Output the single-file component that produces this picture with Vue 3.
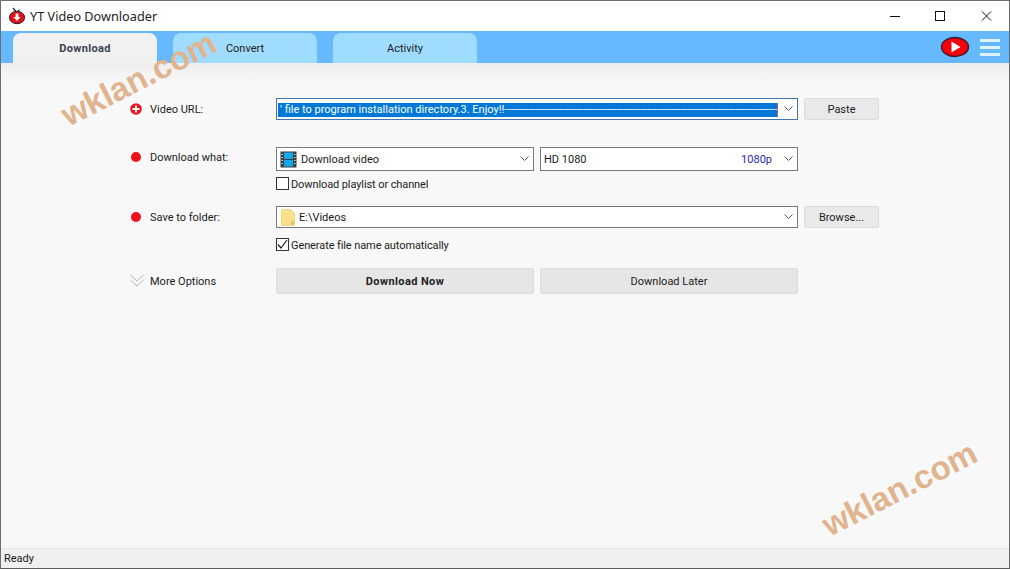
<script setup>
const tabs = ['Download', 'Convert', 'Activity']
const pasted = "' file to program installation directory.3. Enjoy!!" + '-'.repeat(140)
</script>

<template>
  <div class="window">
    <header class="titlebar">
      <svg class="app-icon" width="18" height="18" viewBox="0 0 18 18">
        <path d="M5 1l3.5 4M11.5 2.500L9.500 5" stroke="#222" stroke-width="1.200" fill="none" />
        <ellipse cx="9" cy="10.500" rx="7.600" ry="6.200" fill="#e8101a" stroke="#222" stroke-width="1" />
        <path d="M7.600 6.500h2.800v3.400h2.200L9 14 5.400 9.900h2.200z" fill="#fff" />
      </svg>
      <span class="title">YT Video Downloader</span>
      <div class="win-btns">
        <svg width="46" height="30" viewBox="0 0 46 30"><path d="M21 15.500h10" stroke="#111" /></svg>
        <svg width="46" height="30" viewBox="0 0 46 30"><rect x="19.500" y="10.500" width="9" height="9" fill="none" stroke="#111" /></svg>
        <svg width="46" height="30" viewBox="0 0 46 30"><path d="M19 10.500l9 9M28 10.500l-9 9" stroke="#111" /></svg>
      </div>
    </header>

    <nav class="tabbar">
      <div v-for="(t, n) in tabs" :key="t" class="tab" :class="{ active: n === 0 }">{{ t }}</div>
      <div class="tabbar-tools">
        <svg width="30" height="22" viewBox="0 0 30 22">
          <ellipse cx="15" cy="11" rx="13.500" ry="9.500" fill="#f4000c" stroke="#3a2030" stroke-width="1.400" />
          <path d="M11.500 5.500l9 5.500-9 5.500z" fill="#fff" />
        </svg>
        <div class="burger"><i></i><i></i><i></i></div>
      </div>
    </nav>

    <main class="content">
      <div class="row row-url">
        <svg class="plus" width="12" height="12" viewBox="0 0 12 12">
          <circle cx="6" cy="6" r="5.800" fill="#e8141c" />
          <path d="M6 2.500v7M2.500 6h7" stroke="#fff" stroke-width="1.800" />
        </svg>
        <label>Video URL:</label>
        <div class="field focus span2">
          <div class="value"><span class="selected">{{ pasted }}</span></div>
          <svg class="chev" width="9" height="6" viewBox="0 0 9 6"><path d="M.5 .5l4 4 4-4" fill="none" stroke="#555" /></svg>
        </div>
        <button>Paste</button>
      </div>

      <div class="row row-what">
        <span class="red lift"></span>
        <label class="lift">Download what:</label>
        <div class="field">
          <svg class="film" width="17" height="17" viewBox="0 0 17 17">
            <rect x="0.500" y="0.500" width="16" height="16" fill="#3a3f44" />
            <rect x="4" y="1.500" width="9" height="6.500" fill="#14a8e8" />
            <rect x="4" y="9" width="9" height="6.500" fill="#14a8e8" />
            <path d="M1.500 3.500h1.500M1.500 6.500h1.500M1.500 9.500h1.500M1.500 12.500h1.500M14 3.500h1.500M14 6.500h1.500M14 9.500h1.500M14 12.500h1.500" stroke="#cfd6da" />
          </svg>
          <div class="value">Download video</div>
          <svg class="chev" width="9" height="6" viewBox="0 0 9 6"><path d="M.5 .5l4 4 4-4" fill="none" stroke="#555" /></svg>
        </div>
        <div class="field">
          <div class="value">HD 1080</div>
          <span class="res">1080p</span>
          <svg class="chev" width="9" height="6" viewBox="0 0 9 6"><path d="M.5 .5l4 4 4-4" fill="none" stroke="#555" /></svg>
        </div>
      </div>

      <div class="row row-check1">
        <div class="check col3"><span class="box"></span><span class="check-text">Download playlist or channel</span></div>
      </div>

      <div class="row row-save">
        <span class="red"></span>
        <label>Save to folder:</label>
        <div class="field span2">
          <svg class="folder" width="14" height="17" viewBox="0 0 14 17">
            <path d="M0.500 1.500q0-1 1-1h8l4 4v11q0 1-1 1h-11q-1 0-1-1z" fill="#fbe08c" stroke="#e8d48c" />
            <rect x="10" y="12" width="3" height="4" fill="#e6c65e" />
          </svg>
          <div class="value">E:\Videos</div>
          <svg class="chev" width="9" height="6" viewBox="0 0 9 6"><path d="M.5 .5l4 4 4-4" fill="none" stroke="#555" /></svg>
        </div>
        <button>Browse...</button>
      </div>

      <div class="row row-check2">
        <div class="check col3">
          <span class="box">
            <svg width="11" height="11" viewBox="0 0 11 11"><path d="M1 5.500l3 3.500 6-8" fill="none" stroke="#222" stroke-width="1.200" /></svg>
          </span>
          <span class="check-text">Generate file name automatically</span>
        </div>
      </div>

      <div class="row row-actions">
        <svg width="14" height="14" viewBox="0 0 14 14">
          <path d="M.5 1l6.500 6 6.500-6M.5 6l6.500 6 6.500-6" fill="none" stroke="#b4b4b4" />
        </svg>
        <label>More Options</label>
        <button class="big strong">Download Now</button>
        <button class="big">Download Later</button>
      </div>
    </main>

    <footer class="statusbar">Ready</footer>

    <div class="mark mark-a">wklan.com</div>
    <div class="mark mark-b">wklan.com</div>
  </div>
</template>

<style scoped>
.window {
  position: relative;
  width: 1010px;
  height: 569px;
  box-sizing: border-box;
  border: 1px solid #6e6e6e;
  border-bottom-color: #5c5c5c;
  background: #f8f8f8;
  display: flex;
  flex-direction: column;
  overflow: hidden;
  font-family: Roboto, "Noto Sans", sans-serif;
  font-size: 11px;
  color: #1a1a1a;
}
.titlebar {
  height: 30px;
  background: #fff;
  display: flex;
  align-items: center;
  flex: none;
}
.app-icon {
  margin-left: 7px;
  margin-right: 4px;
}
.title {
  font-family: "Noto Sans", sans-serif;
  font-size: 12.700px;
  color: #222;
}
.win-btns {
  margin-left: auto;
  display: flex;
  gap: 1px;
}
.tabbar {
  height: 32px;
  background: #66b9ff;
  display: flex;
  align-items: flex-end;
  gap: 16px;
  padding-left: 12px;
  flex: none;
}
.tab {
  width: 144px;
  height: 30px;
  box-sizing: border-box;
  padding-top: 1px;
  border-radius: 8px 8px 0 0;
  background: #9fdcff;
  display: flex;
  align-items: center;
  justify-content: center;
  color: #222;
}
.tab.active {
  background: #f1f1f1;
  font-weight: 700;
  letter-spacing: 0.350px;
  color: #3a4250;
}
.tabbar-tools {
  margin-left: auto;
  align-self: center;
  display: flex;
  align-items: center;
  gap: 10px;
  margin-right: 9px;
}
.burger {
  width: 20px;
  display: flex;
  flex-direction: column;
  gap: 4px;
}
.burger i {
  display: block;
  height: 3px;
  background: #dff2ff;
}
.content {
  flex: 1;
  background: linear-gradient(#eeeeee, #f8f8f8 22px);
  padding-left: 129px;
  padding-top: 35px;
}
.row {
  display: grid;
  grid-template-columns: 14px 120px 258px 258px 75px;
  column-gap: 6px;
  align-items: center;
}
.row-what { margin-top: 27px; }
.row-check1 { margin-top: 6px; }
.row-save { margin-top: 16px; }
.row-check2 { margin-top: 10px; }
.row-actions { margin-top: 17px; }
.plus {
  justify-self: start;
  margin-bottom: 1px;
}
.red {
  width: 10px;
  height: 10px;
  margin-left: 1px;
  border-radius: 50%;
  background: #f0101a;
  justify-self: start;
}
.lift {
  margin-bottom: 4px;
}
label {
  color: #222;
}
.field {
  height: 24px;
  box-sizing: border-box;
  border: 1px solid #7a7a7a;
  background: #fff;
  display: flex;
  align-items: center;
  padding-left: 3px;
  min-width: 0;
}
.span2 {
  grid-column: span 2;
  height: 22px;
}
.span2 .value {
  padding-top: 1px;
}
.focus {
  border-color: #4a74ac;
  padding-left: 1px;
}
.value {
  flex: 1;
  min-width: 0;
  white-space: nowrap;
  overflow: hidden;
}
.film,
.folder {
  margin-right: 4px;
  flex: none;
}
.folder {
  margin-left: 1px;
}
.selected {
  display: block;
  width: 500px;
  height: 14px;
  box-sizing: border-box;
  overflow: hidden;
  padding-left: 2px;
  background: #0078d7;
  color: #fff;
  line-height: 14px;
  border-right: 1px solid #d05080;
}
.res {
  color: #2a2ab0;
  margin-right: 7px;
}
.chev {
  margin: 0 4px 0 5px;
  flex: none;
}
.col3 {
  grid-column: 3 / span 2;
}
.check {
  display: flex;
  align-items: center;
  height: 13px;
  gap: 2px;
  color: #222;
}
.check-text {
  margin-top: 2px;
  letter-spacing: -0.100px;
}
.box {
  width: 13px;
  height: 13px;
  box-sizing: border-box;
  border: 1px solid #333;
  background: #fff;
  display: flex;
  align-items: center;
  justify-content: center;
}
button {
  height: 22px;
  box-sizing: border-box;
  border: 1px solid #dcdcdc;
  border-radius: 2px;
  background: #e9e9e9;
  font: inherit;
  color: #222;
  padding: 0;
}
.big {
  height: 26px;
  background: #e6e6e6;
}
.strong {
  font-weight: 700;
  letter-spacing: 0.400px;
}
.statusbar {
  height: 20px;
  box-sizing: border-box;
  flex: none;
  border-top: 1px solid #e6e6e6;
  background: #f0f0f0;
  padding-left: 3px;
  line-height: 19px;
}
.mark {
  position: absolute;
  font-family: "Liberation Sans", sans-serif;
  font-weight: 700;
  font-size: 33px;
  line-height: 1;
  color: #dfb48f;
  transform: rotate(-27deg);
  white-space: nowrap;
}
.mark-a {
  left: 53px;
  top: 61px;
}
.mark-b {
  left: 814px;
  top: 471px;
}
</style>
